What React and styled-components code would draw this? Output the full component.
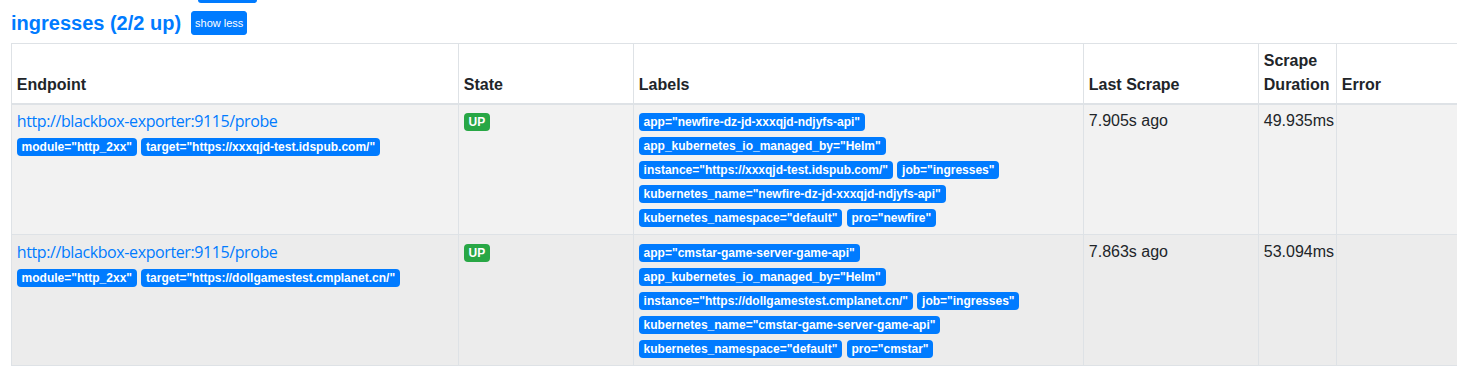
import React from 'react';
import styled, { createGlobalStyle } from 'styled-components';

const GlobalStyle = createGlobalStyle`
  html, body {
    margin: 0;
    padding: 0;
    overflow: hidden;
    background: #fff;
  }
  body {
    font-family: "Liberation Sans", Arial, sans-serif;
    font-size: 16px;
    line-height: 1.5;
    color: #212529;
  }
`

const Page = styled.div`
  padding: 0 0 0 11px;
`

const PrevButton = styled.div`
  width: 59px;
  height: 3px;
  margin-left: 187px;
  background: #007bff;
  border-radius: 0 0 3px 3px;
`

const PoolHeader = styled.div`
  display: flex;
  align-items: center;
  gap: 10px;
  margin: 8px 0 8px;
  height: 24px;
`

const PoolTitle = styled.a`
  font-size: 20px;
  font-weight: 700;
  line-height: 1.2;
  color: #007bff;
  text-decoration: none;
`

const SmallButton = styled.button`
  font-family: inherit;
  font-size: 11px;
  line-height: 1.5;
  height: 24px;
  padding: 0 3px;
  color: #fff;
  background: #007bff;
  border: 1px solid #007bff;
  border-radius: 3px;
`

const Table = styled.table`
  border-collapse: collapse;
  table-layout: fixed;
  width: 1790px;
`

const Th = styled.th`
  text-align: left;
  vertical-align: bottom;
  font-weight: 700;
  padding: 4.8px 4.8px 5.8px;
  border: 1px solid #dee2e6;
  border-bottom-width: 2px;
`

const Row = styled.tr`
  background: ${p => (p.$hover ? '#ececec' : '#f2f2f2')};
`

const Td = styled.td`
  vertical-align: top;
  padding: 4.8px;
  border: 1px solid #dee2e6;
`

const EndpointLink = styled.a`
  font-family: "Open Sans", "Liberation Sans", sans-serif;
  letter-spacing: -0.4px;
  color: #007bff;
  text-decoration: none;
`

const LabelList = styled.div`
  display: block;
`

const Badge = styled.span`
  display: inline-block;
  padding: 3px 4.8px;
  font-size: 12px;
  font-weight: 700;
  line-height: 1;
  white-space: nowrap;
  vertical-align: baseline;
  color: #fff;
  background: ${p => p.$color || '#007bff'};
  border-radius: 4px;
`

const columns = [
  { name: 'Endpoint', width: 447 },
  { name: 'State', width: 175 },
  { name: 'Labels', width: 450 },
  { name: 'Last Scrape', width: 175 },
  { name: 'Scrape Duration', width: 78 },
  { name: 'Error', width: 465 },
]

const targets = [
  {
    discovered: ['module="http_2xx"', 'target="https://xxxqjd-test.idspub.com/"'],
    labels: [
      'app="newfire-dz-jd-xxxqjd-ndjyfs-api"',
      'app_kubernetes_io_managed_by="Helm"',
      'instance="https://xxxqjd-test.idspub.com/"',
      'job="ingresses"',
      'kubernetes_name="newfire-dz-jd-xxxqjd-ndjyfs-api"',
      'kubernetes_namespace="default"',
      'pro="newfire"',
    ],
    lastScrape: '7.905s ago',
    duration: '49.935ms',
  },
  {
    discovered: ['module="http_2xx"', 'target="https://dollgamestest.cmplanet.cn/"'],
    labels: [
      'app="cmstar-game-server-game-api"',
      'app_kubernetes_io_managed_by="Helm"',
      'instance="https://dollgamestest.cmplanet.cn/"',
      'job="ingresses"',
      'kubernetes_name="cmstar-game-server-game-api"',
      'kubernetes_namespace="default"',
      'pro="cmstar"',
    ],
    lastScrape: '7.863s ago',
    duration: '53.094ms',
  },
]

const Labels = ({ items }) => (
  <LabelList>
    {items.map((l, i) => (
      <React.Fragment key={i}>
        <Badge>{l}</Badge>{' '}
      </React.Fragment>
    ))}
  </LabelList>
)

export default function App() {
  return (
    <Page>
      <GlobalStyle />
      <PrevButton />
      <PoolHeader>
        <PoolTitle href="#ingresses">ingresses (2/2 up)</PoolTitle>
        <SmallButton>show less</SmallButton>
      </PoolHeader>
      <Table>
        <colgroup>
          {columns.map(c => <col key={c.name} style={{ width: c.width }} />)}
        </colgroup>
        <thead>
          <tr>
            {columns.map(c => <Th key={c.name}>{c.name}</Th>)}
          </tr>
        </thead>
        <tbody>
          {targets.map((t, i) => (
            <Row key={i} $hover={i === 1}>
              <Td>
                <EndpointLink href="#">http://blackbox-exporter:9115/probe</EndpointLink>
                <Labels items={t.discovered} />
              </Td>
              <Td>
                <Badge $color="#28a745">UP</Badge>
              </Td>
              <Td>
                <Labels items={t.labels} />
              </Td>
              <Td>{t.lastScrape}</Td>
              <Td>{t.duration}</Td>
              <Td />
            </Row>
          ))}
        </tbody>
      </Table>
    </Page>
  )
}
